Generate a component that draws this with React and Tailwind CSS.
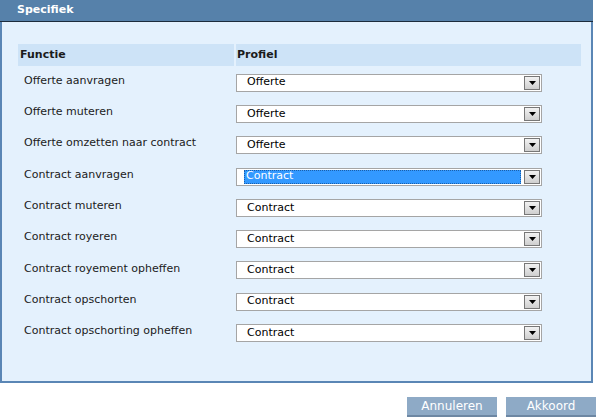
const rows = [
  ["Offerte aanvragen", "Offerte"],
  ["Offerte muteren", "Offerte"],
  ["Offerte omzetten naar contract", "Offerte"],
  ["Contract aanvragen", "Contract", true],
  ["Contract muteren", "Contract"],
  ["Contract royeren", "Contract"],
  ["Contract royement opheffen", "Contract"],
  ["Contract opschorten", "Contract"],
  ["Contract opschorting opheffen", "Contract"],
];

function Select({ value, selected }) {
  return (
    <div className="flex h-[18px] w-[306px] items-stretch border border-[#a5a5a5] bg-white p-px">
      <div className="flex flex-1 items-center pl-[6px]">
        {selected ? (
          <span className="flex h-full flex-1 items-center border border-dotted border-[#1a5faa] bg-[#3399ff] pl-px text-white">
            {value}
          </span>
        ) : (
          <span className="pl-[3px] text-black">{value}</span>
        )}
      </div>
      <div className="ml-[3px] flex w-[16px] items-center justify-center border border-[#777] bg-gradient-to-b from-[#f2f2f2] to-[#cfcfcf]">
        <svg width="7" height="4" viewBox="0 0 7 4">
          <path d="M0 0h7L3.5 4z" fill="#000" />
        </svg>
      </div>
    </div>
  );
}

export default function App() {
  return (
    <div
      className="h-[417px] w-[596px] bg-white text-[11px] text-[#1b1b1b]"
      style={{ fontFamily: '"DejaVu Sans", Verdana, sans-serif' }}
    >
      <div className="w-[593px]">
        <div className="flex h-[22px] items-center border-b border-[#1c2c3c] bg-[#5681aa] pl-[17px] text-[11px] font-bold text-white">
          Specifiek
        </div>
        <div className="h-[361px] border-x-2 border-b-2 border-[#5a86b5] bg-[#e4f1fd] pl-[16px] pr-[10px] pt-[22px]">
          <div className="flex h-[22px] gap-[2px] font-bold">
            <div className="flex w-[216px] items-center bg-[#cde3f7] pl-[2px]">Functie</div>
            <div className="flex flex-1 items-center bg-[#cde3f7] pl-[1px]">Profiel</div>
          </div>
          <div className="flex flex-col pt-[1px]">
            {rows.map(([label, value, sel], i) => (
              <div key={i} className="flex h-[31.3px] items-center">
                <div className="w-[218px] pl-[6px] -mt-[3px]">{label}</div>
                <Select value={value} selected={sel} />
              </div>
            ))}
          </div>
        </div>
      </div>
      <div className="mt-[14px] flex justify-end gap-[9px]">
        <button className="h-[20px] w-[90px] border-b-2 border-[#6d87a3] bg-[#8eaac6] text-[12px] text-white">
          Annuleren
        </button>
        <button className="h-[20px] w-[90px] border-b-2 border-[#6d87a3] bg-[#8eaac6] text-[12px] text-white">
          Akkoord
        </button>
      </div>
    </div>
  );
}
